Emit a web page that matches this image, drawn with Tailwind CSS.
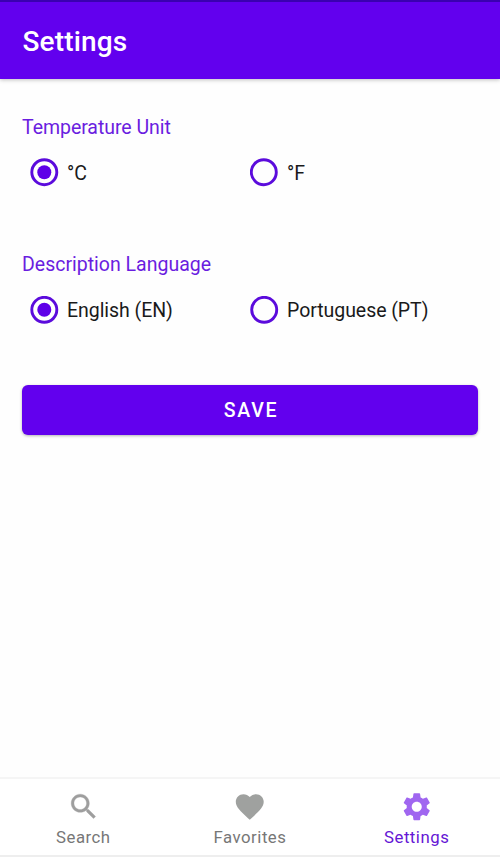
<!DOCTYPE html>
<html lang="en">
<head>
<meta charset="utf-8">
<title>Settings</title>
<script src="https://cdn.jsdelivr.net/npm/@tailwindcss/browser@4"></script>
</head>
<body class="bg-white">
<div class="flex h-[857px] w-[500px] flex-col overflow-hidden bg-[#fefefe] font-['Roboto',sans-serif] text-[19.5px] text-[#1a1a1a]">
  <header class="z-10 flex h-[79px] shrink-0 items-center border-t-2 border-[#3a00b0] bg-[#6200ee] px-[22.5px] pt-[2px] shadow-[0_1px_4px_rgba(0,0,0,0.25)]">
    <h1 class="text-[28px] leading-8 font-medium tracking-[0.15px] text-white">Settings</h1>
  </header>
  <main class="flex grow flex-col px-[22px] pt-[36px]">
    <section class="h-[138px]">
      <h2 class="pt-px leading-6 tracking-[-0.05px] text-[#6a1de0]">Temperature Unit</h2>
      <div class="mt-[18px] grid grid-cols-[220px_1fr] pl-[8px]">
        <div class="flex items-center gap-[8px]">
          <svg class="size-[29px]" viewBox="0 0 29 29" fill="none"><circle cx="14.3" cy="14.2" r="12.5" stroke="#5b0bdc" stroke-width="2.9"/><circle cx="14.3" cy="14.2" r="7" fill="#5f00e8"/></svg>
          <span class="pt-[3px] leading-6 tracking-[-0.05px]">°C</span>
        </div>
        <div class="flex items-center gap-[8px]">
          <svg class="size-[29px]" viewBox="0 0 29 29" fill="none"><circle cx="13.8" cy="14.2" r="12.5" stroke="#5b0bdc" stroke-width="2.9"/></svg>
          <span class="pt-[3px] leading-6 tracking-[-0.05px]">°F</span>
        </div>
      </div>
    </section>
    <section class="h-[132px]">
      <h2 class="leading-6 text-[#6a1de0]">Description Language</h2>
      <div class="mt-[19px] grid grid-cols-[220px_1fr] pl-[8px]">
        <div class="flex items-center gap-[8px]">
          <svg class="size-[29px]" viewBox="0 0 29 29" fill="none"><circle cx="14.3" cy="13.8" r="12.5" stroke="#5b0bdc" stroke-width="2.9"/><circle cx="14.3" cy="13.8" r="7" fill="#5f00e8"/></svg>
          <span class="leading-6 tracking-[-0.05px]">English (EN)</span>
        </div>
        <div class="flex items-center gap-[8px]">
          <svg class="size-[29px]" viewBox="0 0 29 29" fill="none"><circle cx="14.2" cy="13.8" r="12.5" stroke="#5b0bdc" stroke-width="2.9"/></svg>
          <span class="leading-6 tracking-[-0.05px]">Portuguese (PT)</span>
        </div>
      </div>
    </section>
    <button class="h-[50px] w-[456px] rounded-[6px] bg-[#6200ee] pt-[2px] pl-[2px] text-[19.5px] font-medium tracking-[1.75px] text-white shadow-[0_1px_3px_rgba(0,0,0,0.3)]">SAVE</button>
  </main>
  <nav class="grid h-[80px] shrink-0 grid-cols-3 border-t-2 border-[#f5f5f5] border-b-2 border-b-[#eeeeee] bg-white text-[16.8px] tracking-[0.5px] text-[#777]">
    <div class="flex flex-col items-center pt-[11px]">
      <svg class="size-[33.5px]" viewBox="0 0 24 24" fill="#9e9e9e" stroke="#9e9e9e" stroke-width="0.25"><path d="M15.5 14h-.79l-.28-.27C15.41 12.59 16 11.11 16 9.5 16 5.91 13.09 3 9.5 3S3 5.91 3 9.5 5.91 16 9.5 16c1.61 0 3.09-.59 4.23-1.57l.27.28v.79l5 4.99L20.49 19l-4.99-5zm-6 0C7.01 14 5 11.99 5 9.5S7.01 5 9.5 5 14 7.01 14 9.5 11.99 14 9.5 14z"/></svg>
      <span class="mt-[3px] leading-5">Search</span>
    </div>
    <div class="flex flex-col items-center pt-[11px]">
      <svg class="size-[33.5px]" viewBox="0 0 24 24" fill="#9fa19f"><path d="M12 21.35l-1.45-1.32C5.4 15.36 2 12.28 2 8.5 2 5.42 4.42 3 7.5 3c1.74 0 3.41.81 4.5 2.09C13.09 3.81 14.76 3 16.5 3 19.58 3 22 5.42 22 8.5c0 3.78-3.4 6.86-8.55 11.54L12 21.35z"/></svg>
      <span class="mt-[3px] leading-5">Favorites</span>
    </div>
    <div class="flex flex-col items-center pt-[11px] text-[#6516d5]">
      <svg class="size-[33.5px]" viewBox="0 0 24 24" fill="#a066f0"><path d="M19.14 12.94c.04-.3.06-.61.06-.94 0-.32-.02-.64-.07-.94l2.03-1.58c.18-.14.23-.41.12-.61l-1.92-3.32c-.12-.22-.37-.29-.59-.22l-2.39.96c-.5-.38-1.03-.7-1.62-.94l-.36-2.54c-.04-.24-.24-.41-.48-.41h-3.84c-.24 0-.43.17-.47.41l-.36 2.54c-.59.24-1.13.57-1.62.94l-2.39-.96c-.22-.08-.47 0-.59.22L2.74 8.87c-.12.21-.08.47.12.61l2.03 1.58c-.05.3-.09.63-.09.94s.02.64.07.94l-2.03 1.58c-.18.14-.23.41-.12.61l1.92 3.32c.12.22.37.29.59.22l2.39-.96c.5.38 1.03.7 1.62.94l.36 2.54c.05.24.24.41.48.41h3.84c.24 0 .44-.17.47-.41l.36-2.54c.59-.24 1.13-.56 1.62-.94l2.39.96c.22.08.47 0 .59-.22l1.92-3.32c.12-.22.07-.47-.12-.61l-2.01-1.58zM12 15.6c-1.98 0-3.6-1.62-3.6-3.6s1.62-3.6 3.6-3.6 3.6 1.62 3.6 3.6-1.62 3.6-3.6 3.6z"/></svg>
      <span class="mt-[3px] leading-5">Settings</span>
    </div>
  </nav>
</div>
</body>
</html>
